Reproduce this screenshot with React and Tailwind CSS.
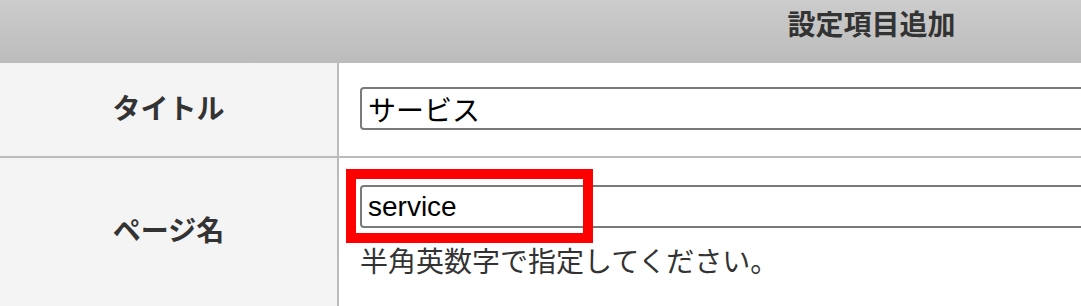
import React from 'react';

const font = "font-['Liberation_Sans','Noto_Sans_CJK_JP',sans-serif]";

const FieldInput = ({ value }) => (
  <input
    type="text"
    value={value}
    readOnly
    className={`${font} block w-full h-[43px] border-2 border-[#7a7a7a] rounded-[4px] px-[6px] text-[28px] text-black bg-white outline-none`}
  />
);

const Row = ({ label, height, children, last }) => (
  <div className={`flex ${last ? '' : 'border-b-2 border-[#bbbbbb]'}`} style={{ height }}>
    <div className="w-[339px] shrink-0 bg-[#f4f4f4] border-r-2 border-[#bbbbbb] flex items-center justify-center">
      <span className="text-[28px] font-bold text-[#333333]">{label}</span>
    </div>
    <div className="flex-1 bg-white">{children}</div>
  </div>
);

export default function App() {
  return (
    <div className={`${font} relative w-[1081px] h-[306px] overflow-hidden bg-white`}>
      <div className="w-[1743px]">
        <div className="h-[63px] bg-gradient-to-b from-[#cccccc] to-[#bcbcbc] flex items-start justify-center pt-[6px]">
          <span className="text-[28px] font-bold text-[#333333] leading-[40px]">設定項目追加</span>
        </div>

        <Row label="タイトル" height={95}>
          <div className="pl-[21px] pt-[24px]">
            <FieldInput value="サービス" />
          </div>
        </Row>

        <Row label="ページ名" height={148} last>
          <div className="pl-[21px] pt-[27px]">
            <FieldInput value="service" />
            <p className="mt-[14px] text-[28px] leading-[42px] text-[#333333]">半角英数字で指定してください。</p>
          </div>
        </Row>
      </div>

      {/* annotation */}
      <div className="absolute left-[346px] top-[169px] w-[247px] h-[74px] border-[10px] border-[#ff0000]" />
    </div>
  );
}
